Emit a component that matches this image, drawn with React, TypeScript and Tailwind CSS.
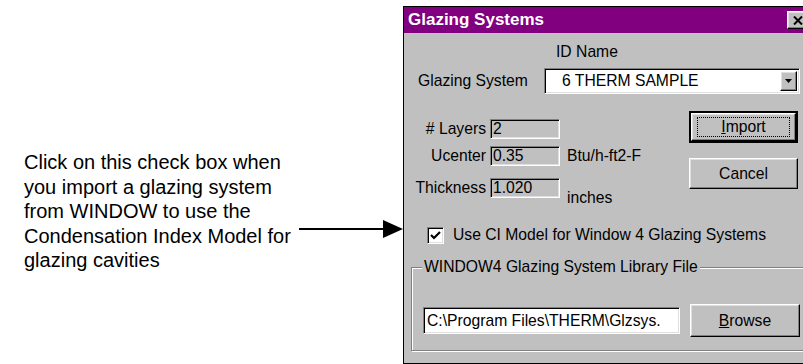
const sunken =
  "border border-t-[#808080] border-l-[#808080] border-r-white border-b-white shadow-[inset_1px_1px_0_#000,inset_-1px_-1px_0_#dfdfdf]";
const raised =
  "border border-t-white border-l-white border-r-black border-b-black shadow-[inset_-1px_-1px_0_#808080,inset_1px_1px_0_#dfdfdf]";

function ReadOnlyRow({
  label,
  value,
  unit,
  className,
}: {
  label: string;
  value: string;
  unit?: string;
  className?: string;
}) {
  return (
    <div className={"flex items-center " + (className ?? "")}>
      <div className="w-[82px] text-right">{label}</div>
      <div className={"ml-[4px] flex h-[20px] w-[70px] items-center pl-[2px] " + sunken}>
        {value}
      </div>
      {unit && <div className="ml-[7px]">{unit}</div>}
    </div>
  );
}

export default function App() {
  return (
    <div
      className="flex h-[364px] w-[803px] overflow-hidden bg-white text-black"
      style={{ fontFamily: '"Liberation Sans", Arial, sans-serif' }}
    >
      {/* callout text */}
      <div className="w-[403px] shrink-0 pl-[24px] pt-[150px] text-[20px] leading-[24.5px]">
        <div>Click on this check box when</div>
        <div>you import a glazing system</div>
        <div>from WINDOW to use the</div>
        <div className="flex items-start">
          <span className="whitespace-nowrap">Condensation Index Model for</span>
          <div className="ml-[8px] mt-[-4px] flex h-[18px] flex-1 items-center">
            <div className="h-[2px] flex-1 bg-black" />
            <svg width="20" height="18" viewBox="0 0 20 18" className="-ml-px">
              <polygon points="0,0 20,9 0,18" fill="#000" />
            </svg>
          </div>
        </div>
        <div>glazing cavities</div>
      </div>

      {/* dialog */}
      <div className="mt-[6px] flex h-[358px] w-[410px] shrink-0 flex-col border border-black bg-[#c0c0c0] text-[15.7px] leading-[18px]">
        <div className="flex h-[26px] items-center bg-[#800080] pl-[4px] pr-[4px]">
          <span className="text-[17px] font-bold text-white">Glazing Systems</span>
          <div className={"ml-auto flex h-[18px] w-[21px] items-center justify-center bg-[#c0c0c0] " + raised}>
            <svg width="10" height="9" viewBox="0 0 10 9">
              <path d="M1 0.5 L9 8.5 M9 0.5 L1 8.5" stroke="#000" strokeWidth="2" />
            </svg>
          </div>
        </div>

        <div className="mt-[10px] pl-[152px]">ID Name</div>

        <div className="mt-[7px] flex items-center pl-[14px]">
          <div className="w-[126px]">Glazing System</div>
          <div className={"flex h-[26px] w-[256px] items-stretch bg-white p-[2px] " + sunken}>
            <div className="flex flex-1 items-center pl-[15px]">6 THERM SAMPLE</div>
            <div className={"flex w-[17px] items-center justify-center bg-[#c0c0c0] " + raised}>
              <svg width="7" height="4" viewBox="0 0 7 4">
                <polygon points="0,0 7,0 3.5,4" fill="#000" />
              </svg>
            </div>
          </div>
        </div>

        <div className="mt-[17px] flex items-start">
          <div className="w-[285px] pt-[8px]">
            <ReadOnlyRow label="# Layers" value="2" />
            <ReadOnlyRow label="Ucenter" value="0.35" unit="Btu/h-ft2-F" className="mt-[7px]" />
            <div className="mt-[12px] flex items-start">
              <ReadOnlyRow label="Thickness" value="1.020" />
              <div className="ml-[7px] mt-[11px]">inches</div>
            </div>
          </div>
          <div className="flex flex-col">
            <div className="h-[32px] w-[109px] border-2 border-black">
              <div className={"flex h-full items-center justify-center " + raised}>
                <div className="flex h-[20px] w-[93px] items-center justify-center border border-dotted border-black">
                  <span>
                    <span className="underline">I</span>mport
                  </span>
                </div>
              </div>
            </div>
            <div className={"mt-[15px] flex h-[31px] w-[109px] items-center justify-center " + raised}>
              Cancel
            </div>
          </div>
        </div>

        <div className="mt-[19px] flex items-center pl-[23px]">
          <div className={"flex h-[17px] w-[17px] items-center justify-center bg-white " + sunken}>
            <svg width="11" height="9" viewBox="0 0 11 9">
              <path d="M1 4 L4 7 L10 1" stroke="#000" strokeWidth="2.2" fill="none" />
            </svg>
          </div>
          <span className="ml-[9px]">Use CI Model for Window 4 Glazing Systems</span>
        </div>

        <fieldset className="mx-[7px] mt-[14px] border border-[#808080] pb-[13px] pl-[11px] shadow-[inset_1px_1px_0_#fff,1px_1px_0_#fff]">
          <legend className="-ml-px bg-[#c0c0c0] px-[2px]">WINDOW4 Glazing System Library File</legend>
          <div className="mt-[28px] flex items-center">
            <div className={"flex h-[27px] w-[257px] items-center bg-white pl-[3px] " + sunken}>
              {"C:\\Program Files\\THERM\\Glzsys."}
            </div>
            <div className={"ml-[10px] flex h-[33px] w-[110px] items-center justify-center " + raised}>
              <span>
                <span className="underline">B</span>rowse
              </span>
            </div>
          </div>
        </fieldset>
      </div>
    </div>
  );
}
